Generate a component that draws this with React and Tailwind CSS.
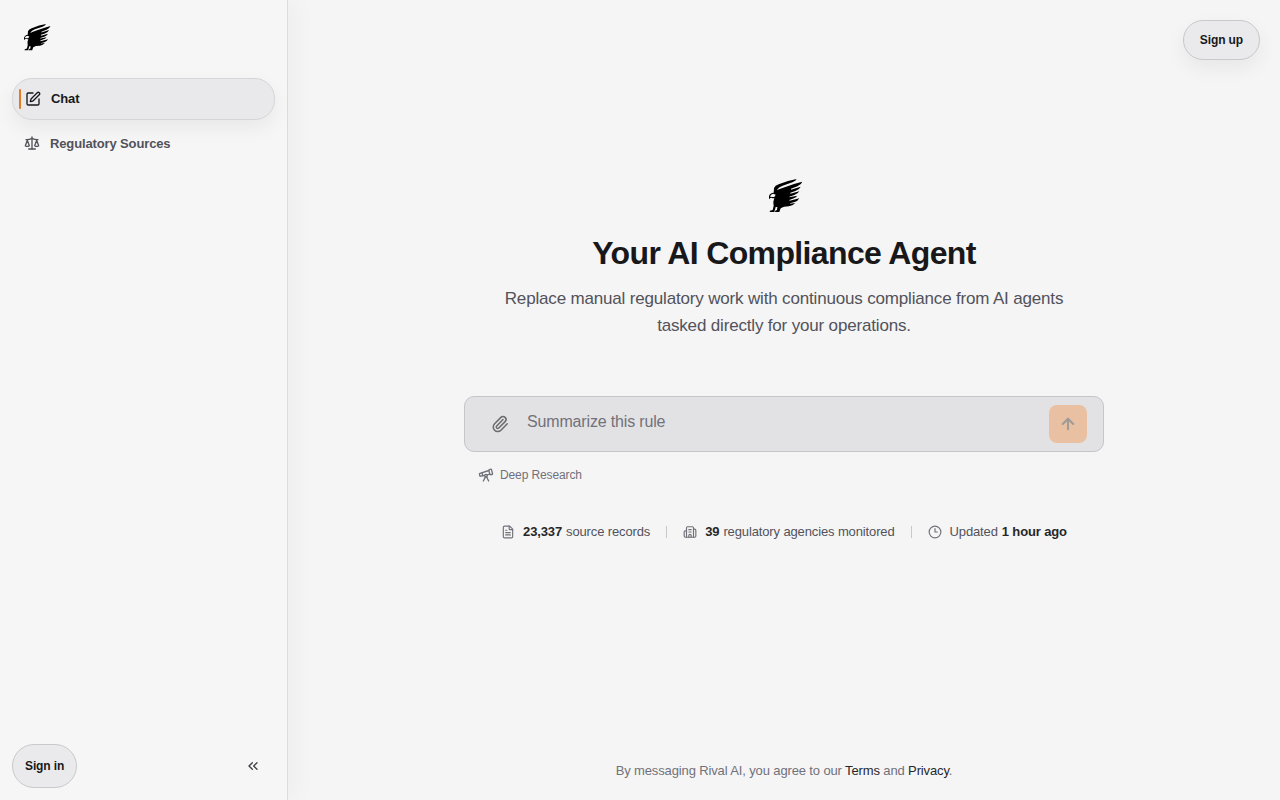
import React, { useState } from 'react';
import {
    ArrowUp, Building2, ChevronsLeft, Clock3, FileText, Paperclip, Scale, SquarePen, Telescope,
} from 'lucide-react';

const EagleLogo = ({ className }) => (
    <svg viewBox="27 26 102 102" className={className} fill="#000" aria-hidden="true">
        <path d="M41 69 L42 53 Q45 46 56 42 L84 32 L110 26 Q108 32 97 36 L68 46 Q56 50 50 60 Q60 55 74 51 L102 41 L127 34 Q124 43 112 48 L93 55 L93 58 L122 49 Q118 58 106 62 L91 67 L91 70 L118 63 Q114 70 103 74 L88 79 L88 81 L112 76 Q108 82 98 85 L88 89 L89 91 L118 84 Q114 92 104 95 L90 99 L91 100 L106 98 Q99 106 87 108 L72 109 L62 114 L58 125 L45 125 L46 121 L51 119 L52 110 L47 110 L43 125 L29 125 L30 121 L38 119 L41 106 Q38 95 43 84 L46 75 Z" />
        <path d="M27 87 Q25 75 32 70 Q40 64 48 70 L46 82 Q42 85 34 82 Q30 83 27 87 Z" />
        <path d="M30 79 Q32 71 39 70 L47 73 L43 80 Q37 80 30 79 Z" fill="#f5f5f5" />
    </svg>
);

const navItems = [
    { id: 'chat', label: 'Chat', icon: SquarePen },
    { id: 'sources', label: 'Regulatory Sources', icon: Scale },
];

const Sidebar = () => {
    const [active, setActive] = useState('chat');

    return (
        <aside className="z-10 flex w-72 shrink-0 flex-col border-r border-[#dcdcde] bg-[#f6f6f6] px-3 pt-6 pb-3 shadow-[8px_0_24px_rgba(0,0,0,0.03)]">
            <EagleLogo className="ml-3 h-[27px] w-[27px]" />
            <nav className="mt-[27px] flex flex-col gap-1">
                {navItems.map(({ id, label, icon: Icon }) => (
                    active === id ? (
                        <button key={id} type="button" className="flex h-[42px] items-center rounded-[20px] border border-[#d6d6d9] bg-[#e9e9eb] pl-1.5 text-[13px] font-semibold tracking-[-0.01em] text-[#18181b] shadow-[0_8px_20px_rgba(0,0,0,0.06)]">
                            <span className="mr-1 h-5 w-0.5 rounded-full bg-[#e07b26]" />
                            <Icon className="mr-2.5 h-4 w-4" />
                            {label}
                        </button>
                    ) : (
                        <button key={id} type="button" onClick={() => setActive(id)} className="flex h-10 items-center rounded-[20px] pl-3 text-[13px] font-semibold tracking-[-0.01em] text-[#52525b]">
                            <Icon className="mr-2.5 mb-0.5 h-4 w-4" />
                            {label}
                        </button>
                    )
                ))}
            </nav>
            <div className="mt-auto flex items-center justify-between">
                <button type="button" className="h-11 rounded-[22px] border border-[#c9c9cc] bg-[#eaeaec] px-3 text-xs font-semibold tracking-[-0.01em] text-[#18181b]">Sign in</button>
                <button type="button" className="mr-3.5 text-[#3f3f46]" aria-label="Collapse sidebar">
                    <ChevronsLeft className="h-4 w-4" />
                </button>
            </div>
        </aside>
    );
};

const Composer = () => {
    const [message, setMessage] = useState('');

    return (
        <div className="mt-[57px] w-[640px]">
            <div className="flex h-14 items-center rounded-[10px] border border-[#c6c6c9] bg-[#e2e2e4] pr-4 pl-[26px]">
                <Paperclip className="h-[18px] w-[18px] text-[#6b6b70]" />
                <input value={message} onChange={(e) => setMessage(e.target.value)} placeholder="Summarize this rule" className="mb-1 ml-[18px] flex-1 bg-transparent text-base tracking-[-0.01em] text-[#27272a] outline-none placeholder:text-[#71717a]" />
                <button type="button" className="flex h-[38px] w-[38px] items-center justify-center rounded-lg bg-[#eac0a3] text-[#9f9b97]" aria-label="Send">
                    <ArrowUp className="h-[18px] w-[18px]" strokeWidth={2.75} />
                </button>
            </div>
            <button type="button" className="mt-[15px] ml-3.5 flex items-center gap-1.5 text-xs tracking-[-0.01em] text-[#71717a]">
                <Telescope className="h-4 w-4" />
                Deep Research
            </button>
        </div>
    );
};

const Stats = () => (
    <div className="mt-[39px] flex items-center gap-4 text-[13px] leading-5 tracking-[-0.01em] text-[#52525b]">
        <div className="flex items-center gap-1">
            <FileText className="mr-1 h-3.5 w-3.5 text-[#71717a]" />
            <strong className="font-semibold text-[#27272a]">23,337</strong>
            <span>source records</span>
        </div>
        <span className="h-3 w-px bg-[#c9c9cc]" />
        <div className="flex items-center gap-1">
            <Building2 className="mr-1 h-3.5 w-3.5 text-[#71717a]" />
            <strong className="font-semibold text-[#27272a]">39</strong>
            <span>regulatory agencies monitored</span>
        </div>
        <span className="h-3 w-px bg-[#c9c9cc]" />
        <div className="flex items-center gap-1">
            <Clock3 className="mr-1 h-3.5 w-3.5 text-[#71717a]" />
            <span>Updated</span>
            <strong className="font-semibold text-[#27272a]">1 hour ago</strong>
        </div>
    </div>
);

const App = () => (
    <div className="flex h-screen bg-[#f5f5f5] font-['Liberation_Sans',Arial,sans-serif]">
        <Sidebar />
        <main className="flex flex-1 flex-col items-center">
            <header className="flex w-full justify-end px-5 pt-5">
                <button type="button" className="h-10 rounded-[20px] border border-[#c9c9cc] bg-[#eaeaec] px-4 text-xs font-semibold tracking-[-0.01em] text-[#18181b] shadow-[0_8px_20px_rgba(0,0,0,0.06)]">Sign up</button>
            </header>
            <section className="mt-[119px] flex flex-col items-center">
                <EagleLogo className="ml-[3px] h-[34px] w-[34px]" />
                <h1 className="mt-5 text-[32px] leading-10 font-semibold tracking-[-0.02em] text-[#18181b]">Your AI Compliance Agent</h1>
                <p className="mt-3 w-[576px] text-center text-[17px] leading-[27px] tracking-[-0.01em] text-[#52525b]">
                    Replace manual regulatory work with continuous compliance from AI agents tasked directly for your operations.
                </p>
                <Composer />
                <Stats />
            </section>
            <footer className="mt-auto pb-5 text-[13px] leading-[19px] tracking-[-0.01em] text-[#71717a]">
                By messaging Rival AI, you agree to our <a href="#terms" className="text-[#27272a]">Terms</a> and <a href="#privacy" className="text-[#27272a]">Privacy</a>.
            </footer>
        </main>
    </div>
);

export default App;
